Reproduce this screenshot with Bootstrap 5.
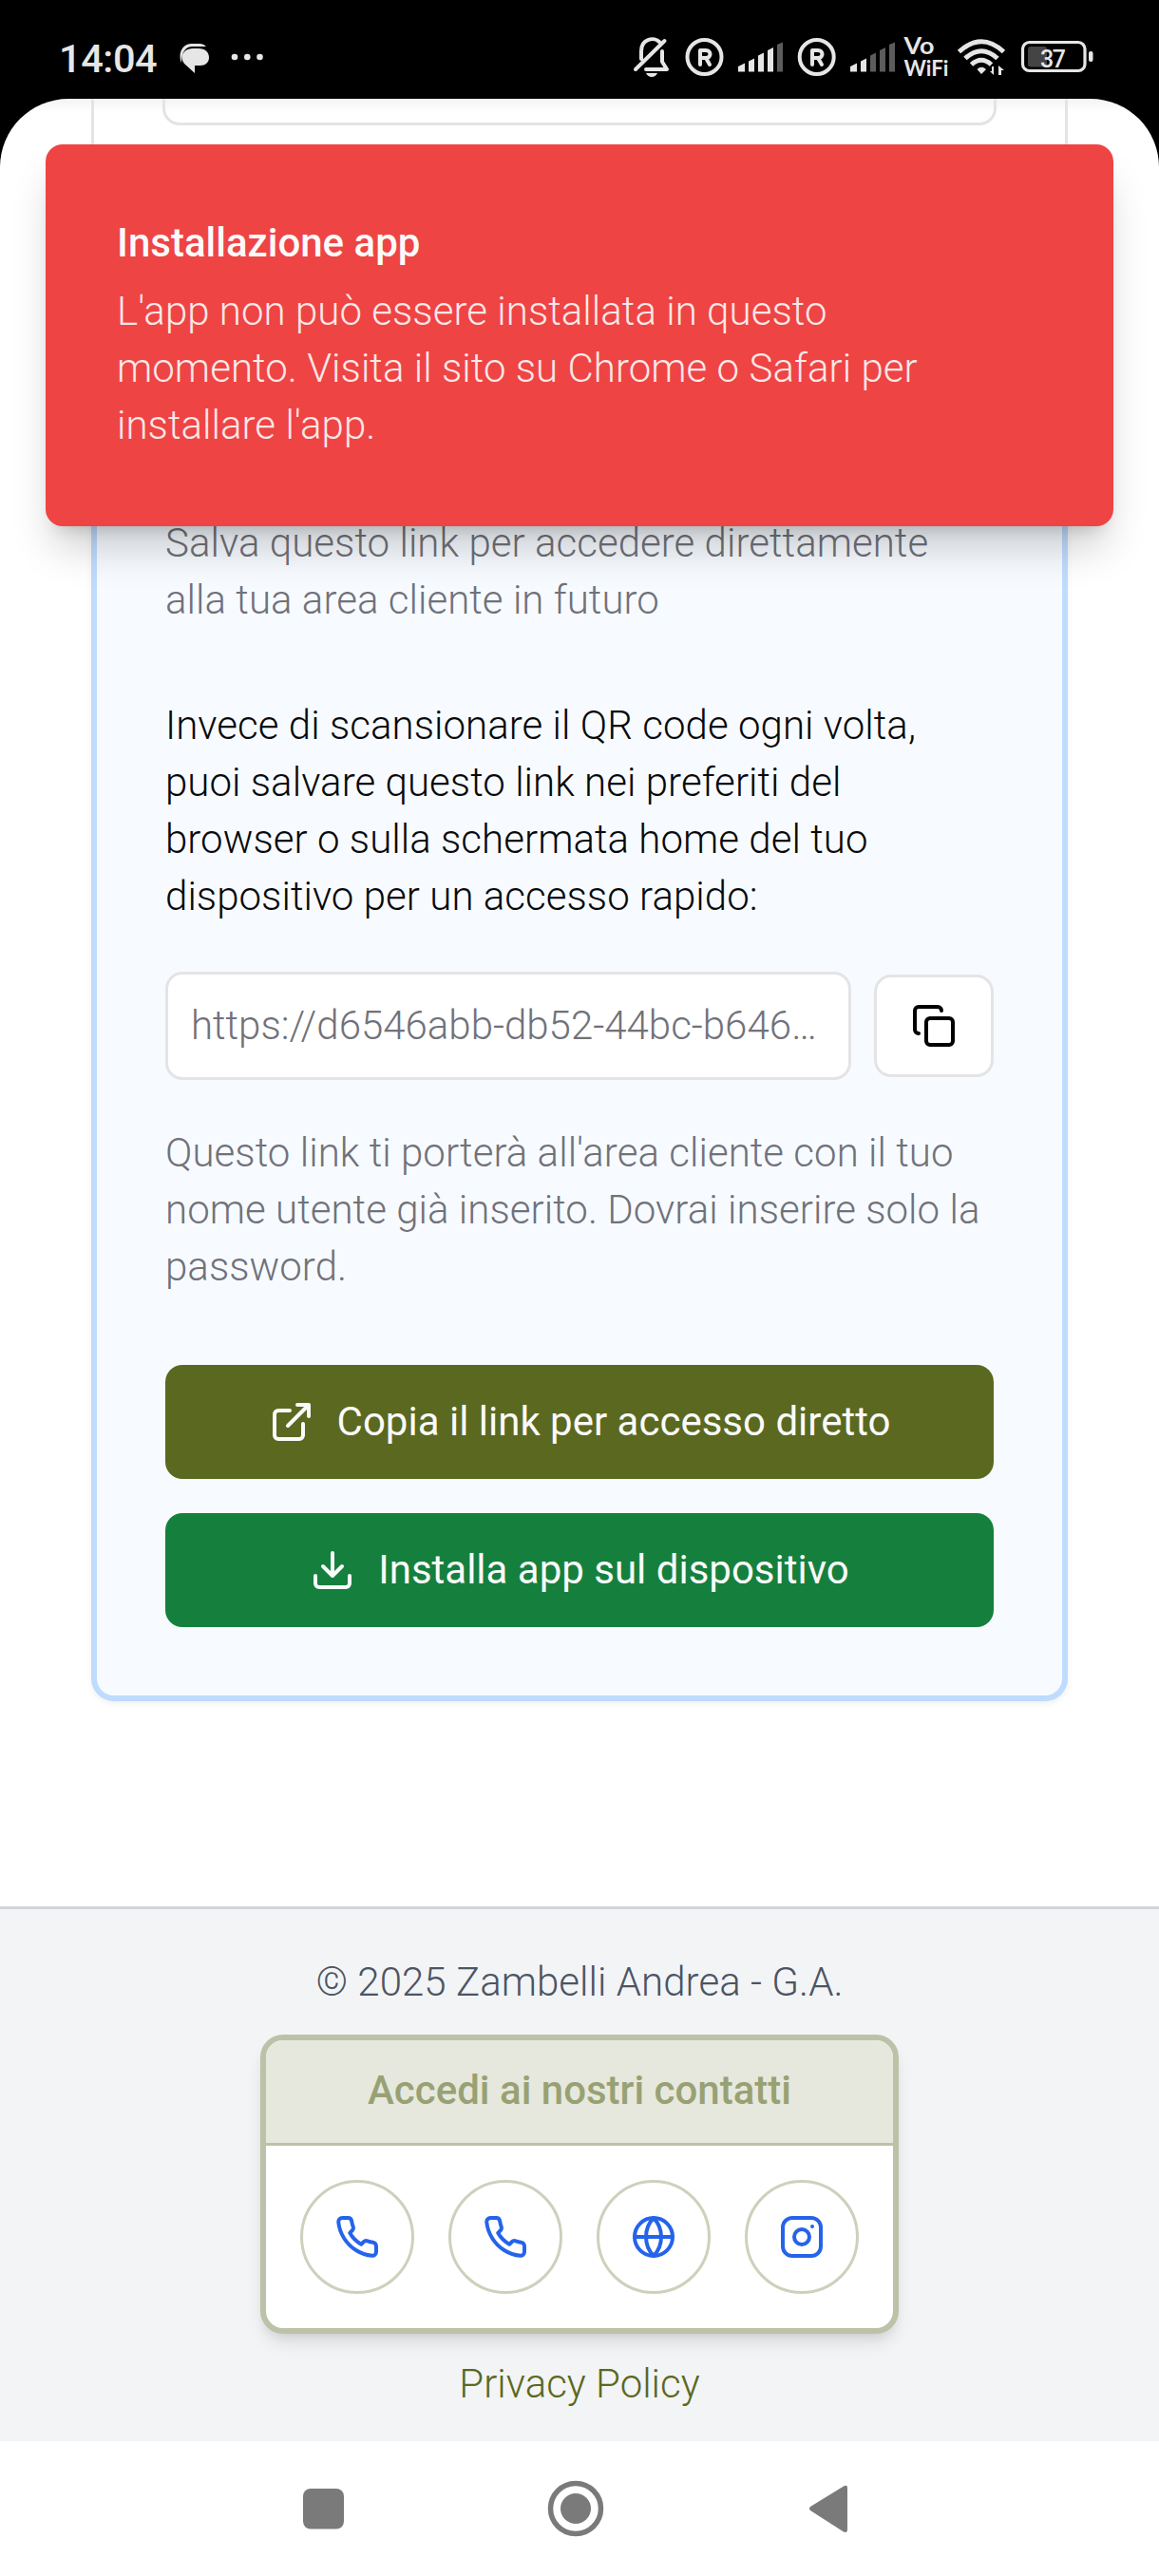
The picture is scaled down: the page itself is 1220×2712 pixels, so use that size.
<!DOCTYPE html>
<html lang="it">
<head>
<meta charset="utf-8">
<meta name="viewport" content="width=device-width, initial-scale=1">
<title>Area cliente</title>
<link href="https://cdn.jsdelivr.net/npm/bootstrap@5.3.0/dist/css/bootstrap.min.css" rel="stylesheet">
<style>
  body { font-family: Roboto, "Liberation Sans", sans-serif; font-size: 42px; line-height: 60px; font-weight: 330; color: #09090b; background: #000; width: 1220px; height: 2712px; overflow: hidden; }
  p { margin: 0; letter-spacing: .04px; }
  .status { height: 104px; color: #e6e6e6; }
  .clock { font-weight: 480; font-size: 41.5px; line-height: 48px; margin: 38px 0 0 62px; width: 127px; letter-spacing: -.4px; }
  .viewport { height: 2466px; border-radius: 72px 72px 0 0; background: linear-gradient(#f3f3f3, #fff 14px); }
  .sheet { height: 436px; margin: 0 96px; border: solid #e4e4e7; border-width: 0 3px; padding: 0 72px; flex: none; }
  .panel-end { height: 28px; border: 3px solid #e4e4e7; border-top: 0; border-radius: 0 0 18px 18px; }
  .link-card { margin: -130px 96px 0; height: 1381px; background: #f7fbff; border: 6px solid #bfdbfe; border-radius: 24px; padding: 126px 72px 0; box-shadow: 0 3px 6px rgba(0,0,0,.06); flex: none; }
  .soft { color: #71717a; }
  .intro { margin-top: 72px; }
  .link-row { margin-top: 49px; height: 114px; gap: 24px; }
  .url { width: 722px; height: 114px; border: 3px solid #e4e4e7; border-radius: 18px; background: #fff; padding: 0 24px; line-height: 107px; }
  .copy-btn { width: 126px; height: 108px; border: 3px solid #e4e4e7; border-radius: 18px; background: #fff; padding: 0; }
  .hint { margin-top: 47px; }
  .wide-btn { height: 120px; border: 0; border-radius: 18px; color: #fafafa; font-size: 42px; line-height: 60px; font-weight: 380; gap: 24px; padding: 0; }
  .wide-btn span { padding-bottom: 1px; }
  .olive { background: #5b6820; margin-top: 73px; }
  .green { background: #15803d; margin-top: 36px; }
  .ico { width: 48px; height: 48px; fill: none; stroke: currentColor; stroke-width: 2; stroke-linecap: round; stroke-linejoin: round; flex: none; display: block; }
  .foot { margin-top: 216px; height: 563px; border-top: 3px solid #d1d5db; background: #f3f4f6; color: #4b5563; padding-top: 47px; flex: none; }
  .contacts { width: 672px; height: 315px; margin-top: 25px; background: #fff; border: 6px solid #bcc2a8; border-radius: 24px; box-shadow: 0 12px 18px -3px rgba(0,0,0,.1), 0 6px 12px -6px rgba(0,0,0,.1); overflow: hidden; }
  .contacts-head { height: 111px; background: #e6e8dd; border-bottom: 3px solid #bcc2a8; font-weight: 480; color: #98a174; padding-top: 23px; }
  .contacts-row { gap: 36px; padding-top: 36px; }
  .round-btn { width: 120px; height: 120px; border: 3px solid #cdd1bc; color: #2563eb; }
  .privacy { color: #5b6820; margin-top: 23px; }
  .navkeys { height: 142px; background: #fff; }
  .app-toast { position: absolute; left: 48px; top: 152px; width: 1124px; height: 402px; padding: 74px 75px; background: #ef4444; border-radius: 18px; color: #fafafa; box-shadow: 0 30px 45px -9px rgba(0,0,0,.2), 0 12px 18px -12px rgba(0,0,0,.2); }
  .app-toast h1 { font-size: 42px; line-height: 60px; font-weight: 480; margin: 0 0 12px; }
  .app-toast p { opacity: .9; }
</style>
</head>
<body class="position-relative">
<header class="status d-flex">
  <div class="clock">14:04</div>
  <svg width="100" height="104" viewBox="189 0 100 104" fill="#e6e6e6">
    <path d="M191 66C188 60 189 47 201 46H210C213 46 215 47 217 49H203C195 49 191 55 191 66Z"/>
    <path d="M203 51H209C216 51 220 55 220 60.500C220 66 216 69 211 69H205V77L194 67C188 59 194 51 203 51Z"/>
    <circle cx="247" cy="60" r="3.300"/><circle cx="260.300" cy="60" r="3.300"/><circle cx="273.500" cy="60" r="3.300"/>
  </svg>
  <svg class="ms-auto" width="560" height="104" viewBox="660 0 560 104" fill="#e6e6e6">
    <g fill="none" stroke="#e6e6e6" stroke-width="4" stroke-linecap="round" stroke-linejoin="round">
      <path d="M669 73L699.500 43M675 62V54C675 40 689 39 694 44"/>
      <path d="M680 73H702L697 65V54"/>
      <circle cx="741.500" cy="60" r="18"/><circle cx="859.700" cy="60" r="18"/>
      <path d="M737 68V53H743C749 53 749 61 743 61H737M743 61L747 68"/>
      <path d="M855 68V53H861C867 53 867 61 861 61H855M861 61L865 68"/>
    </g>
    <path d="M680 77H692Q690 81 686 81T680 77Z"/>
    <path d="M777 75.500V70L784 66.500V75.500ZM788 75.500V64.500L794 61.500V75.500ZM798 75.500V58.500L804 55.500V75.500ZM808 75.500V53L814 50V75.500Z"/>
    <path d="M895 75.500V70L902 66.500V75.500ZM906 75.500V64.500L912 61.500V75.500Z"/>
    <path fill="#5c5c5c" d="M818 75.500V47L824 44.500V75.500ZM916 75.500V58.500L922 55.500V75.500ZM926 75.500V53L932 50V75.500ZM936 75.500V47L942 44.500V75.500Z"/>
    <text x="951.500" y="57" font-family="Lato" font-weight="700" font-size="25" textLength="32" lengthAdjust="spacingAndGlyphs">Vo</text>
    <text x="951.500" y="80" font-family="Lato" font-weight="700" font-size="23.500" textLength="47" lengthAdjust="spacingAndGlyphs">WiFi</text>
    <g fill="none" stroke="#e6e6e6" stroke-width="5">
      <path d="M1009.500 54.500Q1033 33 1056.500 54.500M1016 61.500Q1033 46 1050 61.500M1022.500 68Q1033 58.500 1043.500 68"/>
    </g>
    <path d="M1028.500 73Q1033 68.500 1038 73L1033 78ZM1046 70V79L1042 75H1044V70ZM1051 79V69L1057 74H1054V79Z"/>
    <rect x="1076.500" y="44.500" width="65.500" height="30" rx="7" fill="none" stroke="#e6e6e6" stroke-width="3.200"/>
    <rect x="1146" y="54" width="4.500" height="11" rx="2"/>
    <rect x="1082" y="49" width="20" height="21.500" rx="3" fill="#444"/>
    <text x="1095" y="70.500" font-family="Roboto" font-weight="500" font-size="25" textLength="27">37</text>
  </svg>
</header>

<main class="viewport d-flex flex-column overflow-hidden">
  <div class="sheet"><div class="panel-end"></div></div>
  <section class="link-card">
    <p class="soft">Salva questo link per accedere direttamente<br>alla tua area cliente in futuro</p>
    <p class="intro">Invece di scansionare il QR code ogni volta,<br>puoi salvare questo link nei preferiti del<br>browser o sulla schermata home del tuo<br>dispositivo per un accesso rapido:</p>
    <div class="link-row d-flex align-items-center">
      <div class="url soft text-nowrap">https://d6546abb-db52-44bc-b646…</div>
      <button class="copy-btn d-flex align-items-center justify-content-center" type="button" aria-label="Copia">
        <svg class="ico" viewBox="0 0 24 24" stroke="#09090b"><rect x="8" y="8" width="14" height="14" rx="2"/><path d="M4 16c-1.100 0-2-.900-2-2V4c0-1.100.900-2 2-2h10c1.100 0 2 .900 2 2"/></svg>
      </button>
    </div>
    <p class="hint soft">Questo link ti porterà all'area cliente con il tuo<br>nome utente già inserito. Dovrai inserire solo la<br>password.</p>
    <button class="wide-btn olive w-100 d-flex align-items-center justify-content-center" type="button">
      <svg class="ico" viewBox="0 0 24 24"><path d="M15 3h6v6M10 14L21 3M18 13v6a2 2 0 0 1-2 2H5a2 2 0 0 1-2-2V8a2 2 0 0 1 2-2h6"/></svg>
      <span>Copia il link per accesso diretto</span>
    </button>
    <button class="wide-btn green w-100 d-flex align-items-center justify-content-center" type="button">
      <svg class="ico" viewBox="0 0 24 24"><path d="M21 15v4a2 2 0 0 1-2 2H5a2 2 0 0 1-2-2v-4M7 10l5 5 5-5M12 15V3"/></svg>
      <span>Installa app sul dispositivo</span>
    </button>
  </section>

  <footer class="foot d-flex flex-column align-items-center">
    <p>© 2025 Zambelli Andrea - G.A.</p>
    <div class="contacts">
      <div class="contacts-head text-center">Accedi ai nostri contatti</div>
      <div class="contacts-row d-flex justify-content-center">
        <div class="round-btn rounded-circle d-flex align-items-center justify-content-center"><svg class="ico" viewBox="0 0 24 24"><path d="M22 16.920v3a2 2 0 0 1-2.180 2 19.790 19.790 0 0 1-8.630-3.070 19.500 19.500 0 0 1-6-6 19.790 19.790 0 0 1-3.070-8.670A2 2 0 0 1 4.110 2h3a2 2 0 0 1 2 1.720 12.840 12.840 0 0 0 .700 2.810 2 2 0 0 1-.450 2.110L8.090 9.910a16 16 0 0 0 6 6l1.270-1.270a2 2 0 0 1 2.110-.450 12.840 12.840 0 0 0 2.810.700A2 2 0 0 1 22 16.920z"/></svg></div>
        <div class="round-btn rounded-circle d-flex align-items-center justify-content-center"><svg class="ico" viewBox="0 0 24 24"><path d="M22 16.920v3a2 2 0 0 1-2.180 2 19.790 19.790 0 0 1-8.630-3.070 19.500 19.500 0 0 1-6-6 19.790 19.790 0 0 1-3.070-8.670A2 2 0 0 1 4.110 2h3a2 2 0 0 1 2 1.720 12.840 12.840 0 0 0 .700 2.810 2 2 0 0 1-.450 2.110L8.090 9.910a16 16 0 0 0 6 6l1.270-1.270a2 2 0 0 1 2.110-.450 12.840 12.840 0 0 0 2.810.700A2 2 0 0 1 22 16.920z"/></svg></div>
        <div class="round-btn rounded-circle d-flex align-items-center justify-content-center"><svg class="ico" viewBox="0 0 24 24"><circle cx="12" cy="12" r="10"/><path d="M12 2a14.500 14.500 0 0 0 0 20 14.500 14.500 0 0 0 0-20M2 12h20"/></svg></div>
        <div class="round-btn rounded-circle d-flex align-items-center justify-content-center"><svg class="ico" viewBox="0 0 24 24"><rect x="2" y="2" width="20" height="20" rx="5"/><circle cx="12" cy="12" r="4"/><path d="M17.500 6.500h.01"/></svg></div>
      </div>
    </div>
    <a class="privacy text-decoration-none" href="#">Privacy Policy</a>
  </footer>
</main>

<nav class="navkeys">
  <svg class="d-block" width="1220" height="142" viewBox="0 2570 1220 142" fill="#7a7a7a">
    <rect x="319" y="2620" width="43" height="42.500" rx="8"/>
    <circle cx="606" cy="2641" r="26.500" fill="none" stroke="#7a7a7a" stroke-width="5.500"/>
    <circle cx="606" cy="2641" r="16"/>
    <path d="M853 2643L888 2665.500Q892 2667 892 2663V2619Q892 2615.500 888 2617.500L853 2639Q851 2641 853 2643Z"/>
  </svg>
</nav>

<div class="app-toast" role="alert">
  <h1>Installazione app</h1>
  <p>L'app non può essere installata in questo<br>momento. Visita il sito su Chrome o Safari per<br>installare l'app.</p>
</div>
<script src="https://cdn.jsdelivr.net/npm/bootstrap@5.3.0/dist/js/bootstrap.bundle.min.js"></script>
</body>
</html>
